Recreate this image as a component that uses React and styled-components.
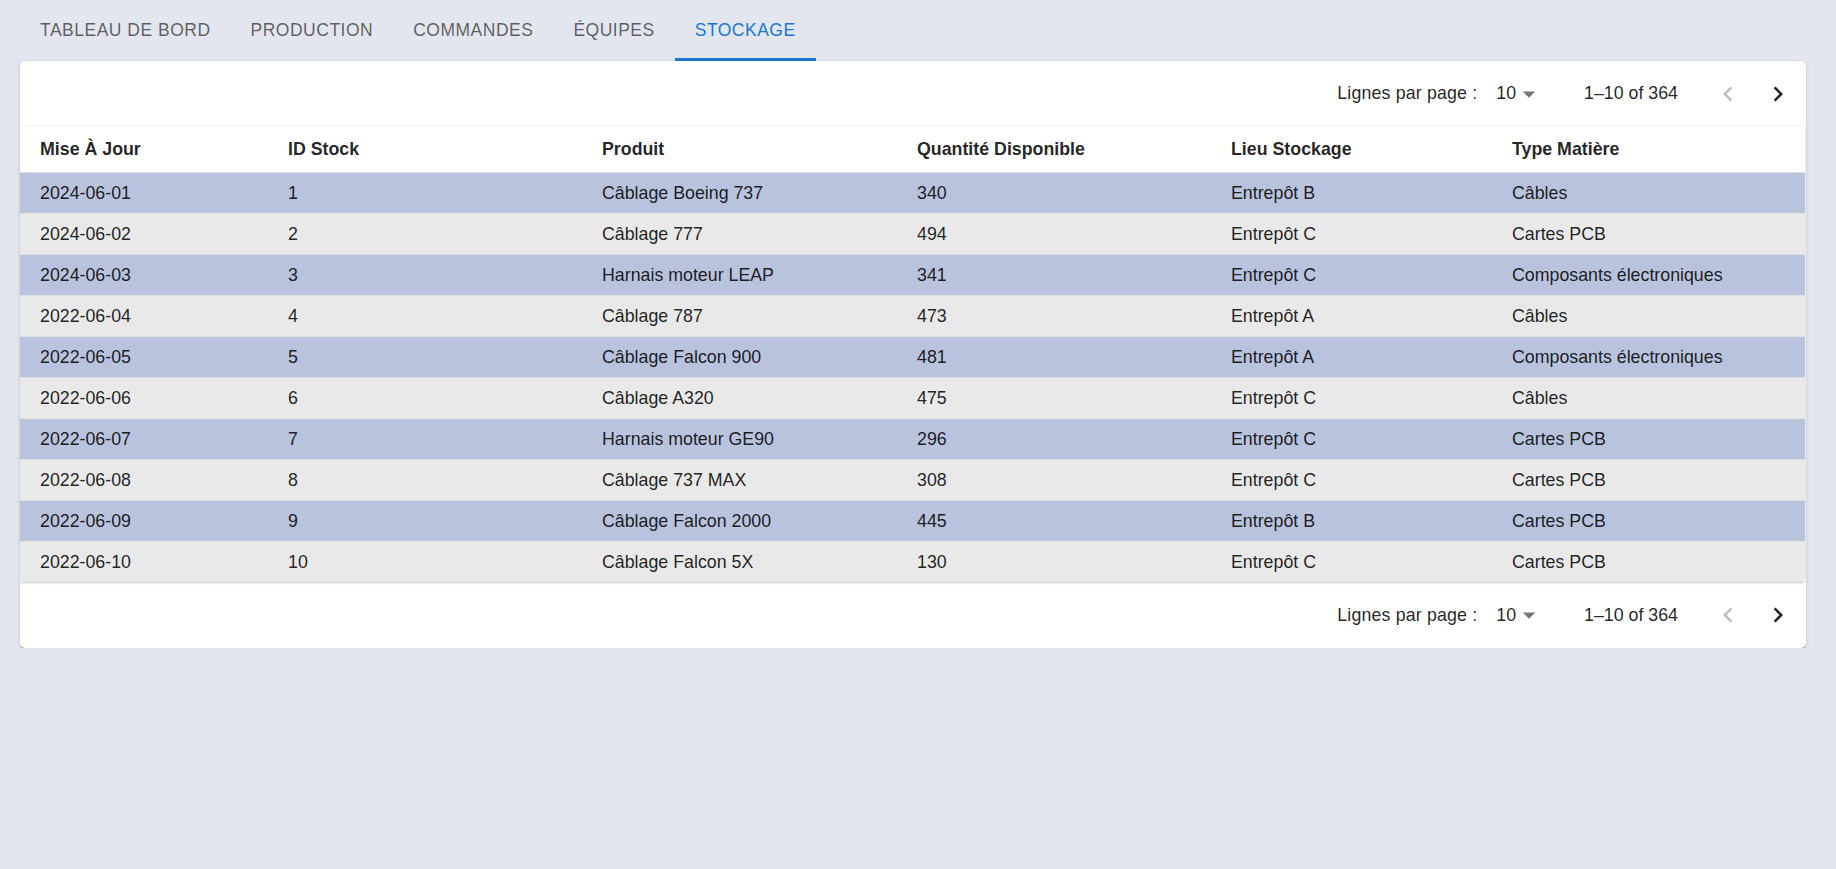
import styled, { createGlobalStyle } from "styled-components";

const GlobalStyle = createGlobalStyle`
    body{
        margin: 0;
        background: #e3e6ef;
        font-family: "Liberation Sans", Arial, sans-serif;
        color: rgba(0, 0, 0, 0.87);
    }
`

const tabs = ['Tableau de bord', 'Production', 'Commandes', 'Équipes', 'Stockage'];

const columns = [
    { label: 'Mise À Jour', width: 248 },
    { label: 'ID Stock', width: 314 },
    { label: 'Produit', width: 315 },
    { label: 'Quantité Disponible', width: 314 },
    { label: 'Lieu Stockage', width: 281 },
    { label: 'Type Matière' },
];

const rows = [
    ['2024-06-01', 1, 'Câblage Boeing 737', 340, 'Entrepôt B', 'Câbles'],
    ['2024-06-02', 2, 'Câblage 777', 494, 'Entrepôt C', 'Cartes PCB'],
    ['2024-06-03', 3, 'Harnais moteur LEAP', 341, 'Entrepôt C', 'Composants électroniques'],
    ['2022-06-04', 4, 'Câblage 787', 473, 'Entrepôt A', 'Câbles'],
    ['2022-06-05', 5, 'Câblage Falcon 900', 481, 'Entrepôt A', 'Composants électroniques'],
    ['2022-06-06', 6, 'Câblage A320', 475, 'Entrepôt C', 'Câbles'],
    ['2022-06-07', 7, 'Harnais moteur GE90', 296, 'Entrepôt C', 'Cartes PCB'],
    ['2022-06-08', 8, 'Câblage 737 MAX', 308, 'Entrepôt C', 'Cartes PCB'],
    ['2022-06-09', 9, 'Câblage Falcon 2000', 445, 'Entrepôt B', 'Cartes PCB'],
    ['2022-06-10', 10, 'Câblage Falcon 5X', 130, 'Entrepôt C', 'Cartes PCB'],
];

function Chevron({dir}){
    return(
        <svg width="30" height="30" viewBox="0 0 24 24">
            {dir === 'left'
                ? <path d="M15.41 16.59 10.83 12l4.58-4.59L14 6l-6 6 6 6z" fill="currentColor"/>
                : <path d="M8.59 16.59 13.17 12 8.59 7.41 10 6l6 6-6 6z" fill="currentColor"/>}
        </svg>
    )
}

function Pagination({bottom}){
    return(
        <Toolbar $bottom={bottom}>
            <span className="label">Lignes par page :</span>
            <Select>
                10
                <svg width="30" height="30" viewBox="0 0 24 24">
                    <path d="M7 10l5 5 5-5z" fill="currentColor"/>
                </svg>
            </Select>
            <span className="count">1–10 of 364</span>
            <IconBtn $disabled><Chevron dir="left"/></IconBtn>
            <IconBtn><Chevron dir="right"/></IconBtn>
        </Toolbar>
    )
}

export default function App(){
    return(
        <>
            <GlobalStyle/>
            <TabBar>
                {tabs.map((t, i) => (
                    <Tab key={t} $active={i === tabs.length - 1}>{t}</Tab>
                ))}
            </TabBar>
            <Card>
                <Pagination/>
                <TableBox>
                    <Table>
                        <colgroup>
                            {columns.map(c => <col key={c.label} style={c.width ? {width: c.width} : undefined}/>)}
                        </colgroup>
                        <thead>
                            <tr>
                                {columns.map(c => <Th key={c.label}>{c.label}</Th>)}
                            </tr>
                        </thead>
                        <tbody>
                            {rows.map((r, i) => (
                                <Row key={r[1]} $odd={i % 2 === 0}>
                                    {r.map((v, j) => <Td key={j}>{v}</Td>)}
                                </Row>
                            ))}
                        </tbody>
                    </Table>
                </TableBox>
                <Pagination bottom/>
            </Card>
        </>
    )
}

const TabBar = styled.nav`
    display: flex;
    padding-left: 20px;
    height: 61px;
`
const Tab = styled.div`
    display: flex;
    align-items: center;
    padding: 0 20px;
    font-size: 17.5px;
    font-weight: 500;
    letter-spacing: 0.5px;
    text-transform: uppercase;
    color: ${p => p.$active ? '#1976d2' : 'rgba(0, 0, 0, 0.6)'};
    box-shadow: ${p => p.$active ? 'inset 0 -3px 0 #1976d2' : 'none'};
`
const Card = styled.section`
    margin: 0 30px 0 20px;
    background: #fff;
    border-radius: 5px;
    box-shadow: 0 2px 1px -1px rgba(0,0,0,0.2), 0 1px 1px 0 rgba(0,0,0,0.14), 0 1px 4px 0 rgba(0,0,0,0.12);
    overflow: hidden;
`
const Toolbar = styled.div`
    display: flex;
    justify-content: flex-end;
    align-items: center;
    height: ${p => p.$bottom ? 66 : 65}px;
    padding-right: 3px;
    font-size: 17.8px;
    color: rgba(0, 0, 0, 0.87);
    .label{
        letter-spacing: 0.15px;
    }
    .count{
        margin-right: 25px;
    }
`
const Select = styled.div`
    display: flex;
    align-items: center;
    margin: 0 40px 0 9px;
    padding-left: 10px;
    height: 30px;
    color: rgba(0, 0, 0, 0.87);
    svg{
        color: rgba(0, 0, 0, 0.54);
        margin-left: -2px;
    }
`
const IconBtn = styled.div`
    width: 50px;
    height: 50px;
    display: flex;
    align-items: center;
    justify-content: center;
    color: ${p => p.$disabled ? 'rgba(0, 0, 0, 0.26)' : 'rgba(0, 0, 0, 0.87)'};
`
const TableBox = styled.div`
    box-shadow: 0 1px 2px rgba(0,0,0,0.25), 0 -1px 2px rgba(0,0,0,0.03);
    border-radius: 0 0 4px 4px;
    margin-right: 1px;
    overflow: hidden;
`
const Table = styled.table`
    width: 100%;
    border-collapse: collapse;
    table-layout: fixed;
    font-size: 17.8px;
    line-height: 24px;
`
const Th = styled.th`
    text-align: left;
    font-weight: 700;
    height: 46px;
    padding: 0 20px;
    border-bottom: 1px solid #e0e0e0;
    color: rgba(0, 0, 0, 0.87);
`
const Row = styled.tr`
    background: ${p => p.$odd ? '#bac3de' : '#e9e9e9'};
`
const Td = styled.td`
    height: 40px;
    padding: 0 20px;
    border-bottom: 1px solid #e0e0e0;
    white-space: nowrap;
    ${Row}:last-child &{
        border-bottom: none;
    }
`
